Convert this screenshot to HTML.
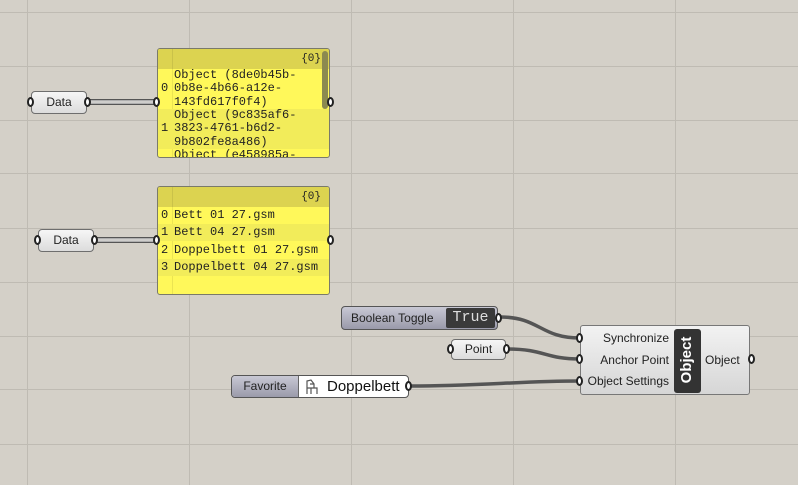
<!DOCTYPE html>
<html><head><meta charset="utf-8"><style>
*{margin:0;padding:0;box-sizing:border-box}
body{width:798px;height:485px;overflow:hidden;background:#d4d0c8;position:relative;font-family:"Liberation Sans",sans-serif}
.a{position:absolute}
.btn{position:absolute;border:1px solid #6e6e6e;border-radius:4px;background:linear-gradient(#f6f6f6,#dcdcdc);font-size:12px;color:#222;text-align:center}
.panel{position:absolute;border:1px solid #7a7a6a;border-radius:3px;background:#fff85a;overflow:hidden;font-family:"Liberation Mono",monospace;font-size:12px;color:#222}
.hdr{background:#dcd350;height:20px;text-align:right;padding-right:8px;line-height:20px;font-size:11px}
.row{position:relative;padding-left:16px;white-space:nowrap}
.row i{position:absolute;left:3px;font-style:normal}
.alt{background:#f2ec5a}
.vl{position:absolute;left:14px;top:0;bottom:0;width:1px;background:rgba(0,0,0,0.08)}
.pin{position:absolute;width:7px;height:10px;border:2px solid #222;border-radius:50%;background:#fff}
</style></head><body>
<svg class="a" style="left:0;top:0" width="798" height="485">
<g stroke="#bfbbb3" stroke-width="1">
<line x1="27.5" y1="0" x2="27.5" y2="485"/><line x1="189.5" y1="0" x2="189.5" y2="485"/><line x1="351.5" y1="0" x2="351.5" y2="485"/><line x1="513.5" y1="0" x2="513.5" y2="485"/><line x1="675.5" y1="0" x2="675.5" y2="485"/>
<line x1="0" y1="12.5" x2="798" y2="12.5"/><line x1="0" y1="66.5" x2="798" y2="66.5"/><line x1="0" y1="120.5" x2="798" y2="120.5"/><line x1="0" y1="173.5" x2="798" y2="173.5"/><line x1="0" y1="228.5" x2="798" y2="228.5"/><line x1="0" y1="282.5" x2="798" y2="282.5"/><line x1="0" y1="336.5" x2="798" y2="336.5"/><line x1="0" y1="389.5" x2="798" y2="389.5"/><line x1="0" y1="444.5" x2="798" y2="444.5"/>
</g>
<g fill="none">
<path d="M88 100 L158 100 M88 104 L158 104" stroke="#555" stroke-width="2"/>
<path d="M88 101 L158 101 M88 103 L158 103" stroke="#ccc" stroke-width="1.5"/>
<path d="M95 238 L158 238 M95 242 L158 242" stroke="#555" stroke-width="2"/>
<path d="M95 239 L158 239 M95 241 L158 241" stroke="#ccc" stroke-width="1.5"/>
<path d="M500 317 C540 317 540 338 580 338" stroke="#555" stroke-width="3.5"/>
<path d="M507 349 C545 349 545 359 580 359" stroke="#555" stroke-width="3.5"/>
<path d="M410 386 C480 386 520 381 580 381" stroke="#555" stroke-width="3.5"/>
</g>
</svg>

<div class="btn" style="left:31px;top:91px;width:56px;height:23px;line-height:21px">Data</div>
<div class="pin" style="left:27px;top:97px"></div><div class="pin" style="left:84px;top:97px"></div>
<div class="btn" style="left:38px;top:229px;width:56px;height:23px;line-height:21px">Data</div>
<div class="pin" style="left:34px;top:235px"></div><div class="pin" style="left:91px;top:235px"></div>

<div class="panel" style="left:157px;top:48px;width:173px;height:110px">
<div class="vl"></div>
<div class="hdr">{0}</div>
<div class="row" style="height:40px;line-height:13.3px"><i style="top:13px">0</i>Object (8de0b45b-<br>0b8e-4b66-a12e-<br>143fd617f0f4)</div>
<div class="row alt" style="height:40px;line-height:13.3px"><i style="top:13px">1</i>Object (9c835af6-<br>3823-4761-b6d2-<br>9b802fe8a486)</div>
<div class="row" style="height:20px;line-height:13px">Object (e458985a-</div>
<div class="a" style="left:164px;top:2px;width:6px;height:58px;background:#8c8a50;border-radius:3px"></div>
</div>
<div class="pin" style="left:153px;top:97px"></div><div class="pin" style="left:327px;top:97px"></div>

<div class="panel" style="left:157px;top:186px;width:173px;height:109px">
<div class="vl"></div>
<div class="hdr">{0}</div>
<div class="row" style="height:17px;line-height:17px"><i>0</i>Bett 01 27.gsm</div>
<div class="row alt" style="height:17px;line-height:17px"><i>1</i>Bett 04 27.gsm</div>
<div class="row" style="height:18px;line-height:18px"><i>2</i>Doppelbett 01 27.gsm</div>
<div class="row alt" style="height:17px;line-height:17px"><i>3</i>Doppelbett 04 27.gsm</div>
</div>
<div class="pin" style="left:153px;top:235px"></div><div class="pin" style="left:327px;top:235px"></div>

<div class="a" style="left:341px;top:306px;width:157px;height:24px;border:1px solid #555;border-radius:4px;background:linear-gradient(#c8c8d4,#9a9aaa);font-size:12px;line-height:22px;padding-left:9px;color:#222">Boolean Toggle</div>
<div class="a" style="left:446px;top:308px;width:49px;height:20px;background:#3a3a3a;border-radius:2px;color:#ddd;font-family:'Liberation Mono',monospace;font-size:15px;line-height:19px;text-align:center">True</div>
<div class="pin" style="left:495px;top:313px"></div>

<div class="btn" style="left:451px;top:339px;width:55px;height:21px;line-height:19px">Point</div>
<div class="pin" style="left:447px;top:344px"></div><div class="pin" style="left:503px;top:344px"></div>

<div class="a" style="left:231px;top:375px;width:178px;height:23px;border:1px solid #555;border-radius:4px;background:#fff;overflow:hidden">
<div class="a" style="left:0;top:0;width:67px;height:21px;background:linear-gradient(#c8c8d4,#9a9aaa);border-right:1px solid #666;font-size:12px;line-height:21px;text-align:center;color:#222">Favorite</div>
<svg class="a" style="left:73px;top:3px" width="14" height="16" fill="none" stroke="#555" stroke-width="1.2"><path d="M2 15 V2 L6 1 L9 5 V9 M2 9 H12 L12 15 M6 9 V15 M9 5 H5"/></svg>
<div class="a" style="left:95px;top:0;font-size:15px;line-height:21px;color:#111">Doppelbett</div>
</div>
<div class="pin" style="left:405px;top:381px"></div>

<div class="a" style="left:580px;top:325px;width:170px;height:70px;border:1px solid #777;border-radius:3px;background:linear-gradient(#f2f2f2,#d6d6d6);font-size:12px;color:#222">
<div class="a" style="right:80px;top:5px;white-space:nowrap">Synchronize</div>
<div class="a" style="right:80px;top:27px;white-space:nowrap">Anchor Point</div>
<div class="a" style="right:80px;top:48px;white-space:nowrap">Object Settings</div>
<div class="a" style="left:93px;top:3px;width:27px;height:64px;background:#333;border-radius:3px"></div>
<div class="a" style="left:74px;top:24px;width:64px;height:20px;transform:rotate(-90deg);color:#fff;font-weight:bold;font-size:15px;line-height:20px;text-align:center">Object</div>
<div class="a" style="left:124px;top:27px">Object</div>
</div>
<div class="pin" style="left:576px;top:333px"></div><div class="pin" style="left:576px;top:354px"></div><div class="pin" style="left:576px;top:376px"></div><div class="pin" style="left:748px;top:354px"></div>
</body></html>
